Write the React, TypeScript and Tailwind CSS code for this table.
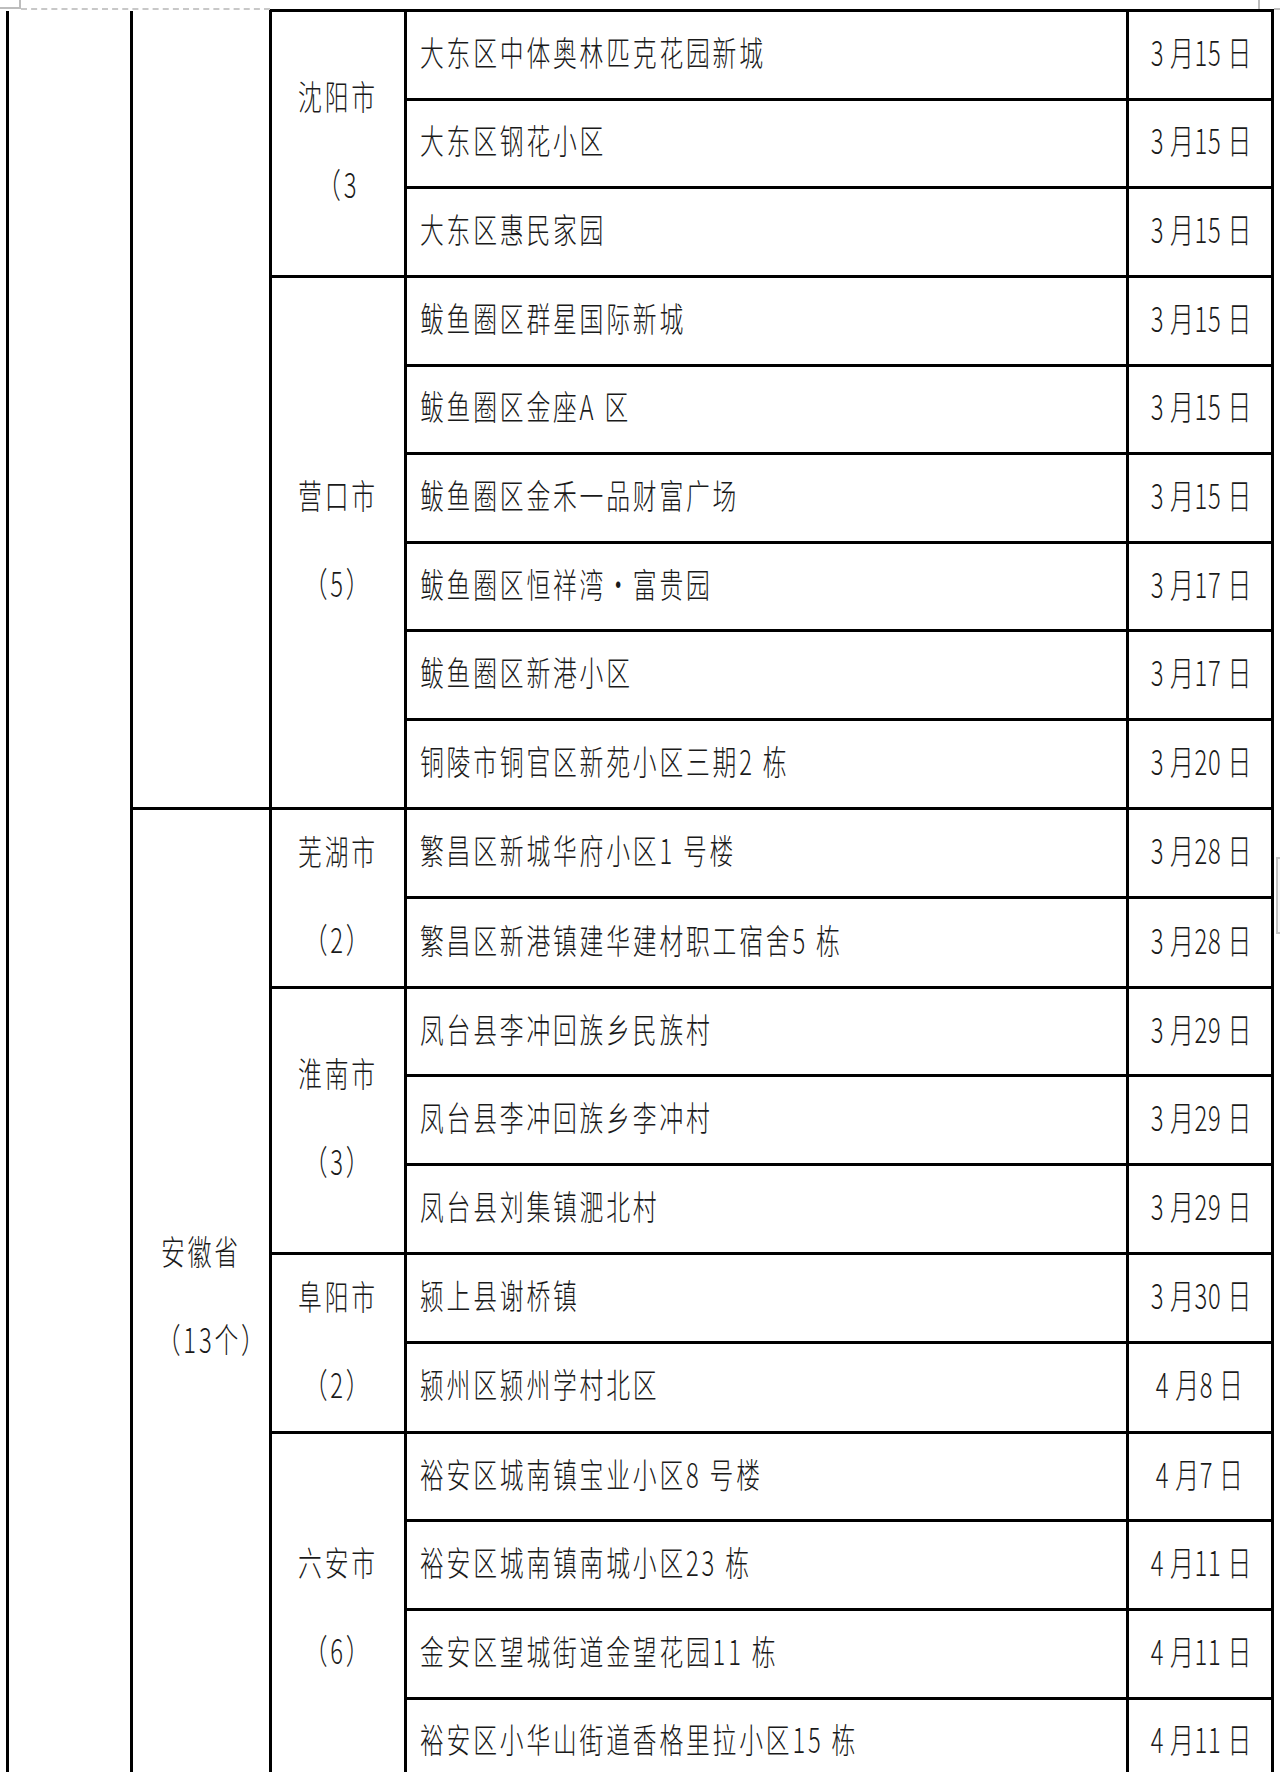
import React from "react";

type Row = { place: string; date: string };

const rows: Row[] = [
  { place: "大东区中体奥林匹克花园新城", date: "3 月15 日" },
  { place: "大东区钢花小区", date: "3 月15 日" },
  { place: "大东区惠民家园", date: "3 月15 日" },
  { place: "鲅鱼圈区群星国际新城", date: "3 月15 日" },
  { place: "鲅鱼圈区金座A 区", date: "3 月15 日" },
  { place: "鲅鱼圈区金禾一品财富广场", date: "3 月15 日" },
  { place: "鲅鱼圈区恒祥湾·富贵园", date: "3 月17 日" },
  { place: "鲅鱼圈区新港小区", date: "3 月17 日" },
  { place: "铜陵市铜官区新苑小区三期2 栋", date: "3 月20 日" },
  { place: "繁昌区新城华府小区1 号楼", date: "3 月28 日" },
  { place: "繁昌区新港镇建华建材职工宿舍5 栋", date: "3 月28 日" },
  { place: "凤台县李冲回族乡民族村", date: "3 月29 日" },
  { place: "凤台县李冲回族乡李冲村", date: "3 月29 日" },
  { place: "凤台县刘集镇淝北村", date: "3 月29 日" },
  { place: "颍上县谢桥镇", date: "3 月30 日" },
  { place: "颍州区颍州学村北区", date: "4 月8 日" },
  { place: "裕安区城南镇宝业小区8 号楼", date: "4 月7 日" },
  { place: "裕安区城南镇南城小区23 栋", date: "4 月11 日" },
  { place: "金安区望城街道金望花园11 栋", date: "4 月11 日" },
  { place: "裕安区小华山街道香格里拉小区15 栋", date: "4 月11 日" },
];

// city cells keyed by the row index where they start
const cities: Record<number, { name: string; count: string; span: number }> = {
  0: { name: "沈阳市", count: "（3", span: 3 },
  3: { name: "营口市", count: "（5）", span: 6 },
  9: { name: "芜湖市", count: "（2）", span: 2 },
  11: { name: "淮南市", count: "（3）", span: 3 },
  14: { name: "阜阳市", count: "（2）", span: 2 },
  16: { name: "六安市", count: "（6）", span: 4 },
};

function Squeeze({ children, left }: { children: React.ReactNode; left?: boolean }) {
  return (
    <span
      className={`inline-block whitespace-nowrap scale-x-[0.7] tracking-[4px] ${left ? "origin-left" : "origin-center"}`}
    >
      {children}
    </span>
  );
}

function TwoLines({ top, bottom }: { top: string; bottom: string }) {
  return (
    <div className="text-center leading-[88px]">
      <div>
        <Squeeze>{top}</Squeeze>
      </div>
      <div>
        <Squeeze>{bottom}</Squeeze>
      </div>
    </div>
  );
}

export default function App() {
  return (
    <div className="relative h-[1772px] w-[1280px] overflow-hidden bg-white text-[34px] font-light text-[#1a1a1a] font-['Noto_Sans_CJK_SC','Liberation_Sans',sans-serif]">
      {/* page corner marks */}
      <div className="absolute left-0 top-[7px] h-[2px] w-[21px] bg-[#bdbdbd]" />
      <div className="absolute left-[19px] top-0 h-[9px] w-[2px] bg-[#bdbdbd]" />
      <div className="absolute left-[21px] top-[8px] w-[249px] border-t-2 border-dashed border-[#c8c8c8]" />
      <div className="absolute left-[1258px] top-0 h-[9px] w-[2px] bg-[#bdbdbd]" />
      <div className="absolute left-[1274px] top-[8px] h-[2px] w-[6px] bg-[#bdbdbd]" />
      <div className="absolute left-[1276px] top-[857px] h-[77px] w-[10px] border-2 border-[#c4c4c4] bg-[#f7f7f7]" />

      <div className="pl-[6px] pt-[9px]">
        <table className="w-[1268px] table-fixed border-collapse">
          <colgroup>
            <col className="w-[124px]" />
            <col className="w-[139px]" />
            <col className="w-[135px]" />
            <col className="w-[722px]" />
            <col className="w-[145px]" />
          </colgroup>
          <tbody>
            {rows.map((r, i) => {
              const city = cities[i];
              return (
                <tr key={i} className="h-[88.65px]">
                  {i === 0 && (
                    <td rowSpan={20} className="border-[3px] border-t-0 border-black p-0" />
                  )}
                  {i === 0 && (
                    <td rowSpan={9} className="border-[3px] border-t-0 border-black p-0" />
                  )}
                  {i === 9 && (
                    <td rowSpan={11} className="border-[3px] border-black p-0 align-middle">
                      <div className="-translate-y-[3px]">
                        <TwoLines top="安徽省" bottom="（13个）" />
                      </div>
                    </td>
                  )}
                  {city && (
                    <td rowSpan={city.span} className="border-[3px] border-black p-0 align-middle">
                      <div className="-translate-y-[3px]">
                        <TwoLines top={city.name} bottom={city.count} />
                      </div>
                    </td>
                  )}
                  <td className="border-[3px] border-black p-0 pl-[13px] text-left align-middle leading-none">
                    <div className="-translate-y-[3px]">
                      <Squeeze left>{r.place}</Squeeze>
                    </div>
                  </td>
                  <td className="border-[3px] border-black p-0 text-center align-middle leading-none">
                    <div className="-translate-y-[3px]">
                      <span className="inline-block whitespace-nowrap scale-x-[0.7] tracking-[1px]">{r.date}</span>
                    </div>
                  </td>
                </tr>
              );
            })}
          </tbody>
        </table>
      </div>
    </div>
  );
}
